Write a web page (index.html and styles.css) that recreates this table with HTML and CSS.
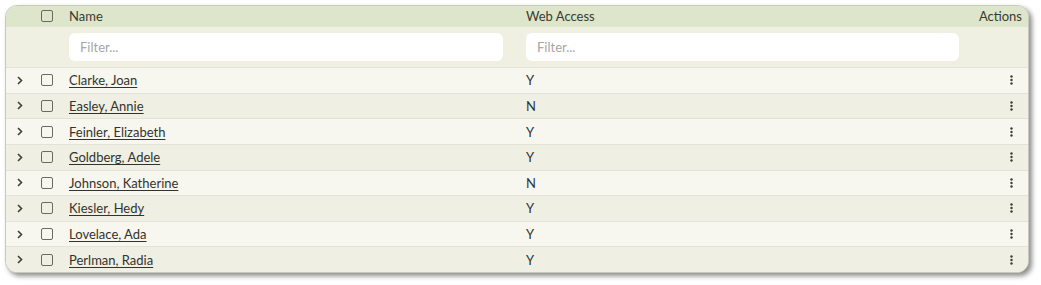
FILE: index.html
```html
<!DOCTYPE html>
<html>
<head>
<meta charset="utf-8">
<link rel="stylesheet" href="styles.css">
</head>
<body>
<div class="card">
  <div class="row head">
    <div class="cell"></div>
    <div class="cell center"><span class="cb"></span></div>
    <div class="cell name">Name</div>
    <div class="cell web">Web Access</div>
    <div class="cell actions">Actions</div>
  </div>
  <div class="row filters">
    <div class="cell"></div>
    <div class="cell"></div>
    <div class="cell name"><div class="input">Filter...</div></div>
    <div class="cell web"><div class="input">Filter...</div></div>
    <div class="cell actions"></div>
  </div>
  <div class="body">
    <div class="row data"><div class="cell center"><svg class="chev" viewBox="0 0 8 10"><path d="M2 1.5 L5.5 5 L2 8.5" /></svg></div><div class="cell center"><span class="cb"></span></div><div class="cell name"><a>Clarke, Joan</a></div><div class="cell web">Y</div><div class="cell actions"><svg class="dots" viewBox="0 0 3 10"><circle cx="1.5" cy="1.5" r="1.2"/><circle cx="1.5" cy="5" r="1.2"/><circle cx="1.5" cy="8.5" r="1.2"/></svg></div></div>
    <div class="row data"><div class="cell center"><svg class="chev" viewBox="0 0 8 10"><path d="M2 1.5 L5.5 5 L2 8.5" /></svg></div><div class="cell center"><span class="cb"></span></div><div class="cell name"><a>Easley, Annie</a></div><div class="cell web">N</div><div class="cell actions"><svg class="dots" viewBox="0 0 3 10"><circle cx="1.5" cy="1.5" r="1.2"/><circle cx="1.5" cy="5" r="1.2"/><circle cx="1.5" cy="8.5" r="1.2"/></svg></div></div>
    <div class="row data"><div class="cell center"><svg class="chev" viewBox="0 0 8 10"><path d="M2 1.5 L5.5 5 L2 8.5" /></svg></div><div class="cell center"><span class="cb"></span></div><div class="cell name"><a>Feinler, Elizabeth</a></div><div class="cell web">Y</div><div class="cell actions"><svg class="dots" viewBox="0 0 3 10"><circle cx="1.5" cy="1.5" r="1.2"/><circle cx="1.5" cy="5" r="1.2"/><circle cx="1.5" cy="8.5" r="1.2"/></svg></div></div>
    <div class="row data"><div class="cell center"><svg class="chev" viewBox="0 0 8 10"><path d="M2 1.5 L5.5 5 L2 8.5" /></svg></div><div class="cell center"><span class="cb"></span></div><div class="cell name"><a>Goldberg, Adele</a></div><div class="cell web">Y</div><div class="cell actions"><svg class="dots" viewBox="0 0 3 10"><circle cx="1.5" cy="1.5" r="1.2"/><circle cx="1.5" cy="5" r="1.2"/><circle cx="1.5" cy="8.5" r="1.2"/></svg></div></div>
    <div class="row data"><div class="cell center"><svg class="chev" viewBox="0 0 8 10"><path d="M2 1.5 L5.5 5 L2 8.5" /></svg></div><div class="cell center"><span class="cb"></span></div><div class="cell name"><a>Johnson, Katherine</a></div><div class="cell web">N</div><div class="cell actions"><svg class="dots" viewBox="0 0 3 10"><circle cx="1.5" cy="1.5" r="1.2"/><circle cx="1.5" cy="5" r="1.2"/><circle cx="1.5" cy="8.5" r="1.2"/></svg></div></div>
    <div class="row data"><div class="cell center"><svg class="chev" viewBox="0 0 8 10"><path d="M2 1.5 L5.5 5 L2 8.5" /></svg></div><div class="cell center"><span class="cb"></span></div><div class="cell name"><a>Kiesler, Hedy</a></div><div class="cell web">Y</div><div class="cell actions"><svg class="dots" viewBox="0 0 3 10"><circle cx="1.5" cy="1.5" r="1.2"/><circle cx="1.5" cy="5" r="1.2"/><circle cx="1.5" cy="8.5" r="1.2"/></svg></div></div>
    <div class="row data"><div class="cell center"><svg class="chev" viewBox="0 0 8 10"><path d="M2 1.5 L5.5 5 L2 8.5" /></svg></div><div class="cell center"><span class="cb"></span></div><div class="cell name"><a>Lovelace, Ada</a></div><div class="cell web">Y</div><div class="cell actions"><svg class="dots" viewBox="0 0 3 10"><circle cx="1.5" cy="1.5" r="1.2"/><circle cx="1.5" cy="5" r="1.2"/><circle cx="1.5" cy="8.5" r="1.2"/></svg></div></div>
    <div class="row data"><div class="cell center"><svg class="chev" viewBox="0 0 8 10"><path d="M2 1.5 L5.5 5 L2 8.5" /></svg></div><div class="cell center"><span class="cb"></span></div><div class="cell name"><a>Perlman, Radia</a></div><div class="cell web">Y</div><div class="cell actions"><svg class="dots" viewBox="0 0 3 10"><circle cx="1.5" cy="1.5" r="1.2"/><circle cx="1.5" cy="5" r="1.2"/><circle cx="1.5" cy="8.5" r="1.2"/></svg></div></div>
  </div>
</div>
</body>
</html>
```

FILE: styles.css
```css
* { box-sizing: border-box; }
html, body { margin: 0; background: #ffffff; }
body {
  padding: 5px 12px 12px 5px;
  font-family: Lato, "Noto Sans", sans-serif;
  font-size: 13px;
  color: #333333;
}
.card {
  width: 1024px;
  height: 268px;
  border-radius: 12px;
  overflow: hidden;
  border: 1px solid #c8c8c0;
  box-shadow: 3px 3px 5px rgba(0,0,0,0.45);
  background: #f7f7ef;
  display: flex;
  flex-direction: column;
}
.row {
  display: grid;
  grid-template-columns: 26px 29px 457px 449px 1fr;
  align-items: center;
}
.cell { display: flex; align-items: center; min-width: 0; }
.center { justify-content: center; }
.name { padding-left: 8px; padding-right: 15px; }
.web { padding-left: 8px; padding-right: 8px; }
.actions { justify-content: flex-end; padding-right: 6px; }
.head {
  height: 21px;
  background: #dde6cb;
  color: #3a3a32;
  padding-bottom: 2px;
}
.filters {
  height: 41px;
  background: #efefe2;
  border-bottom: 1px solid #e2e2d6;
}
.input {
  width: 100%;
  height: 28px;
  background: #ffffff;
  border-radius: 6px;
  padding-left: 11px;
  display: flex;
  align-items: center;
  color: #a6a6a6;
  font-size: 13px;
}
.body { flex: 1; display: flex; flex-direction: column; }
.data {
  flex: 1;
  border-bottom: 1px solid #e2e2d8;
}
.data:nth-child(odd) { background: #f7f7ef; }
.data:nth-child(even) { background: #efefe3; }
.data:last-child { border-bottom: none; }
.cb {
  width: 12px;
  height: 12px;
  border: 1.4px solid #6a6a62;
  border-radius: 2px;
  display: block;
}
.chev {
  width: 8px;
  height: 11px;
  fill: none;
  stroke: #40403a;
  stroke-width: 1.6;
  margin-left: 1px;
}
a {
  color: #33332e;
  text-decoration: underline;
  text-underline-offset: 2px;
  text-decoration-thickness: 1px;
}
.dots { width: 3px; height: 10px; fill: #3c3c38; margin-right: 9px; display: block; }
```
